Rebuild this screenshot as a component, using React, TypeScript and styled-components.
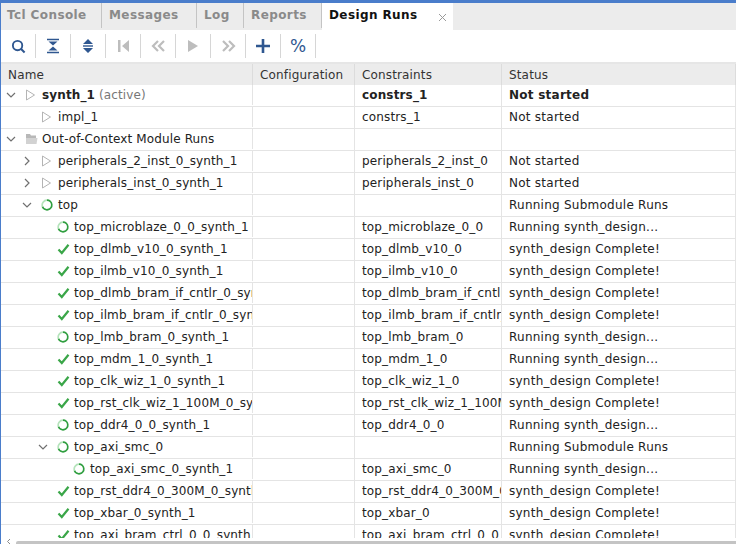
import * as React from 'react';
import styled, { createGlobalStyle } from 'styled-components';

const GlobalStyle = createGlobalStyle`
  html, body {
    margin: 0;
    padding: 0;
    height: 544px;
    overflow: hidden;
    background: #ffffff;
    font-family: "DejaVu Sans", sans-serif;
  }
`;

const Frame = styled.div`
  width: 736px;
  height: 544px;
  box-sizing: border-box;
  border-top: 3px solid #4a7dcb;
  border-left: 1px solid #4a7dcb;
  display: flex;
  flex-direction: column;
  overflow: hidden;
`;

const TabBar = styled.div`
  height: 27px;
  flex: none;
  display: flex;
  background: #ececec;
`;

const Tab = styled.div<{ $width: number; $active?: boolean }>`
  width: ${(p) => p.$width}px;
  flex: none;
  box-sizing: border-box;
  padding: 5px 0 0 7px;
  display: flex;
  justify-content: space-between;
  font-size: 12px;
  font-weight: bold;
  letter-spacing: 0.4px;
  color: ${(p) => (p.$active ? '#111111' : '#8a8a8a')};
  background: ${(p) => (p.$active ? '#ffffff' : '#ececec')};
  border-right: 1px solid ${(p) => (p.$active ? '#ffffff' : '#c4c4c4')};
  margin-bottom: ${(p) => (p.$active ? '0' : '2px')};

  &:first-child {
    padding-left: 6px;
  }
`;

const CloseIcon = styled.svg`
  margin: 5px 5px 0 0;
`;

const Toolbar = styled.div`
  height: 32px;
  flex: none;
  display: flex;
  align-items: center;
`;

const ToolButton = styled.div`
  width: 35px;
  height: 24px;
  flex: none;
  box-sizing: border-box;
  border-right: 1px solid #d6d6d6;
  display: flex;
  align-items: center;
  justify-content: center;
`;

const Percent = styled.span`
  font-size: 17px;
  font-weight: normal;
  color: #2f5790;
  line-height: 1;
`;

const Table = styled.div`
  flex: 1;
  min-height: 0;
  overflow: hidden;
`;

const Columns = `
  display: grid;
  grid-template-columns: 252px 102px 147px 1fr;
`;

const HeaderRow = styled.div`
  ${Columns}
  height: 23px;
  background: #ececec;
  border-top: 2px solid #e6e6e6;
  box-sizing: border-box;
`;

const HeaderCell = styled.div`
  box-sizing: border-box;
  font-size: 12px;
  letter-spacing: 0.15px;
  color: #333333;
  padding-left: 7px;
  line-height: 22px;
  border-right: 1px solid #dcdcdc;
`;

const Row = styled.div`
  ${Columns}
  height: 22px;
  box-sizing: border-box;
  border-bottom: 1px solid #e4e4e4;
`;

const Cell = styled.div<{ $bold?: boolean; $wide?: boolean }>`
  box-sizing: border-box;
  min-width: 0;
  overflow: hidden;
  white-space: nowrap;
  font-size: 12px;
  letter-spacing: ${(p) => (p.$wide ? '0.25px' : '0.15px')};
  line-height: 21px;
  padding-left: 7px;
  color: #222222;
  font-weight: ${(p) => (p.$bold ? 'bold' : 'normal')};
  border-right: 1px solid #e4e4e4;
`;

const NameCell = styled.div<{ $level: number }>`
  box-sizing: border-box;
  min-width: 0;
  overflow: hidden;
  white-space: nowrap;
  display: flex;
  align-items: center;
  height: 20px;
  padding-left: ${(p) => p.$level * 16 + 1}px;
  border-right: 1px solid #e4e4e4;
`;

const ChevronSlot = styled.span`
  width: 18px;
  height: 20px;
  flex: none;
  display: flex;
  align-items: center;
  justify-content: center;
`;

const IconSlot = styled.span`
  width: 22px;
  height: 20px;
  flex: none;
  display: flex;
  align-items: center;
  justify-content: center;
`;

const NameText = styled.span<{ $bold?: boolean }>`
  font-size: 12px;
  letter-spacing: 0.13px;
  color: #222222;
  font-weight: ${(p) => (p.$bold ? 'bold' : 'normal')};
`;

const Muted = styled.span`
  font-weight: normal;
  color: #777777;
`;

const ScrollTrack = styled.div`
  height: 6px;
  flex: none;
  background: #ffffff;
  display: flex;
  align-items: flex-end;
  gap: 4px;
  padding-left: 5px;
`;

const ScrollArrow = styled.svg`
  flex: none;
`;

const ScrollThumb = styled.div`
  flex: 1;
  height: 3px;
  background: #c4c4c4;
  border-radius: 2px 0 0 0;
`;

type Kind = 'idle' | 'spin' | 'done' | 'folder';

type RunRow = {
  name: string;
  level: number;
  kind: Kind;
  open?: boolean;
  closed?: boolean;
  active?: boolean;
  constraints?: string;
  status?: string;
};

const runs: RunRow[] = [
  { name: 'synth_1', level: 0, kind: 'idle', open: true, active: true, constraints: 'constrs_1', status: 'Not started' },
  { name: 'impl_1', level: 1, kind: 'idle', constraints: 'constrs_1', status: 'Not started' },
  { name: 'Out-of-Context Module Runs', level: 0, kind: 'folder', open: true },
  { name: 'peripherals_2_inst_0_synth_1', level: 1, kind: 'idle', closed: true, constraints: 'peripherals_2_inst_0', status: 'Not started' },
  { name: 'peripherals_inst_0_synth_1', level: 1, kind: 'idle', closed: true, constraints: 'peripherals_inst_0', status: 'Not started' },
  { name: 'top', level: 1, kind: 'spin', open: true, status: 'Running Submodule Runs' },
  { name: 'top_microblaze_0_0_synth_1', level: 2, kind: 'spin', constraints: 'top_microblaze_0_0', status: 'Running synth_design...' },
  { name: 'top_dlmb_v10_0_synth_1', level: 2, kind: 'done', constraints: 'top_dlmb_v10_0', status: 'synth_design Complete!' },
  { name: 'top_ilmb_v10_0_synth_1', level: 2, kind: 'done', constraints: 'top_ilmb_v10_0', status: 'synth_design Complete!' },
  { name: 'top_dlmb_bram_if_cntlr_0_synth_1', level: 2, kind: 'done', constraints: 'top_dlmb_bram_if_cntlr_0', status: 'synth_design Complete!' },
  { name: 'top_ilmb_bram_if_cntlr_0_synth_1', level: 2, kind: 'done', constraints: 'top_ilmb_bram_if_cntlr_0', status: 'synth_design Complete!' },
  { name: 'top_lmb_bram_0_synth_1', level: 2, kind: 'spin', constraints: 'top_lmb_bram_0', status: 'Running synth_design...' },
  { name: 'top_mdm_1_0_synth_1', level: 2, kind: 'done', constraints: 'top_mdm_1_0', status: 'Running synth_design...' },
  { name: 'top_clk_wiz_1_0_synth_1', level: 2, kind: 'done', constraints: 'top_clk_wiz_1_0', status: 'synth_design Complete!' },
  { name: 'top_rst_clk_wiz_1_100M_0_synth_1', level: 2, kind: 'done', constraints: 'top_rst_clk_wiz_1_100M_0', status: 'synth_design Complete!' },
  { name: 'top_ddr4_0_0_synth_1', level: 2, kind: 'spin', constraints: 'top_ddr4_0_0', status: 'Running synth_design...' },
  { name: 'top_axi_smc_0', level: 2, kind: 'spin', open: true, status: 'Running Submodule Runs' },
  { name: 'top_axi_smc_0_synth_1', level: 3, kind: 'spin', constraints: 'top_axi_smc_0', status: 'Running synth_design...' },
  { name: 'top_rst_ddr4_0_300M_0_synth_1', level: 2, kind: 'done', constraints: 'top_rst_ddr4_0_300M_0', status: 'synth_design Complete!' },
  { name: 'top_xbar_0_synth_1', level: 2, kind: 'done', constraints: 'top_xbar_0', status: 'synth_design Complete!' },
  { name: 'top_axi_bram_ctrl_0_0_synth_1', level: 2, kind: 'done', constraints: 'top_axi_bram_ctrl_0_0', status: 'synth_design Complete!' },
];

const NAVY = '#2f5790';
const DISABLED = '#bdbdbd';

const StatusIcon = ({ kind }: { kind: Kind }) => {
  if (kind === 'idle') {
    return (
      <svg width="12" height="14" viewBox="0 0 12 14">
        <path d="M1.5 2 L9.5 7 L1.5 12 Z" fill="none" stroke="#b4b4b4" strokeWidth="1" />
      </svg>
    );
  }
  if (kind === 'spin') {
    return (
      <svg width="12" height="12" viewBox="0 0 12 12">
        <path d="M6 1.2 A4.8 4.8 0 1 1 1.4 7.4" fill="none" stroke="#2f9e3f" strokeWidth="1.7" />
        <path d="M1.4 7.4 A4.8 4.8 0 0 1 6 1.2" fill="none" stroke="#b5e3bb" strokeWidth="1.7" />
      </svg>
    );
  }
  if (kind === 'done') {
    return (
      <svg width="13" height="12" viewBox="0 0 13 12">
        <path d="M1.5 6.5 L4.8 10 L11.5 1.8" fill="none" stroke="#3aa648" strokeWidth="2.2" />
      </svg>
    );
  }
  return (
    <svg width="13" height="12" viewBox="0 0 13 12">
      <path d="M1 1 H5 L6 2.5 H11 V5 H1 Z" fill="#b8b8b8" />
      <path d="M1 5 H12.5 L11.5 11 H1 Z" fill="#d2d2d2" />
    </svg>
  );
};

const Chevron = ({ open }: { open: boolean }) => (
  <svg width="10" height="10" viewBox="0 0 10 10">
    <path
      d={open ? 'M1 3 L5 7 L9 3' : 'M3 1 L7 5 L3 9'}
      fill="none"
      stroke="#707070"
      strokeWidth="1.2"
    />
  </svg>
);

const tools: React.ReactNode[] = [
  <svg width="15" height="15" viewBox="0 0 16 16" key="search">
    <circle cx="7" cy="7" r="5" fill="none" stroke={NAVY} strokeWidth="2" />
    <path d="M10.5 10.5 L14.5 14.5" stroke={NAVY} strokeWidth="2.2" />
  </svg>,
  <svg width="14" height="16" viewBox="0 0 14 16" key="collapse">
    <path d="M1 1.5 H13 M1 14.5 H13" stroke={NAVY} strokeWidth="1.4" />
    <path d="M2.5 3.5 H11.5 L7 7.5 Z M2.5 12.5 H11.5 L7 8.5 Z" fill={NAVY} />
  </svg>,
  <svg width="12" height="16" viewBox="0 0 12 16" key="expand">
    <path d="M6 1 L11 6 H1 Z M1 10 H11 L6 15 Z" fill={NAVY} />
    <path d="M1 8 H11" stroke={NAVY} strokeWidth="1.4" />
  </svg>,
  <svg width="13" height="14" viewBox="0 0 13 14" key="first">
    <path d="M1 1 H3.5 V13 H1 Z M12 1 V13 L5 7 Z" fill={DISABLED} />
  </svg>,
  <svg width="15" height="12" viewBox="0 0 15 12" key="prev">
    <path d="M7 1 L2 6 L7 11 M13 1 L8 6 L13 11" fill="none" stroke={DISABLED} strokeWidth="2.2" />
  </svg>,
  <svg width="12" height="14" viewBox="0 0 12 14" key="play">
    <path d="M1 1 L11 7 L1 13 Z" fill={DISABLED} />
  </svg>,
  <svg width="15" height="12" viewBox="0 0 15 12" key="next">
    <path d="M2 1 L7 6 L2 11 M8 1 L13 6 L8 11" fill="none" stroke={DISABLED} strokeWidth="2.2" />
  </svg>,
  <svg width="14" height="14" viewBox="0 0 14 14" key="add">
    <path d="M7 0 V14 M0 7 H14" stroke={NAVY} strokeWidth="2.6" />
  </svg>,
  <Percent key="percent">%</Percent>,
];

const App: React.FunctionComponent = () => {
  return (
    <Frame>
      <GlobalStyle />
      <TabBar>
        <Tab $width={101}>Tcl Console</Tab>
        <Tab $width={95}>Messages</Tab>
        <Tab $width={47}>Log</Tab>
        <Tab $width={78}>Reports</Tab>
        <Tab $width={131} $active>
          Design Runs
          <CloseIcon width="9" height="9" viewBox="0 0 9 9">
            <path d="M1 1 L8 8 M8 1 L1 8" stroke="#9a9a9a" strokeWidth="1" />
          </CloseIcon>
        </Tab>
      </TabBar>
      <Toolbar>
        {tools.map((tool, i) => (
          <ToolButton key={i}>{tool}</ToolButton>
        ))}
      </Toolbar>
      <Table>
        <HeaderRow>
          <HeaderCell>Name</HeaderCell>
          <HeaderCell>Configuration</HeaderCell>
          <HeaderCell>Constraints</HeaderCell>
          <HeaderCell>Status</HeaderCell>
        </HeaderRow>
        {runs.map((run) => (
          <Row key={run.name}>
            <NameCell $level={run.level}>
              <ChevronSlot>
                {run.open && <Chevron open />}
                {run.closed && <Chevron open={false} />}
              </ChevronSlot>
              <IconSlot>
                <StatusIcon kind={run.kind} />
              </IconSlot>
              <NameText $bold={run.active}>
                {run.name}
                {run.active && <Muted> (active)</Muted>}
              </NameText>
            </NameCell>
            <Cell />
            <Cell $bold={run.active}>{run.constraints}</Cell>
            <Cell $bold={run.active} $wide>
              {run.status}
            </Cell>
          </Row>
        ))}
      </Table>
      <ScrollTrack>
        <ScrollArrow width="6" height="6" viewBox="0 0 6 6">
          <path d="M4 1 L1.5 3.5 L4 6" fill="none" stroke="#8a8a8a" strokeWidth="1" />
        </ScrollArrow>
        <ScrollThumb />
      </ScrollTrack>
    </Frame>
  );
};

export default App;
